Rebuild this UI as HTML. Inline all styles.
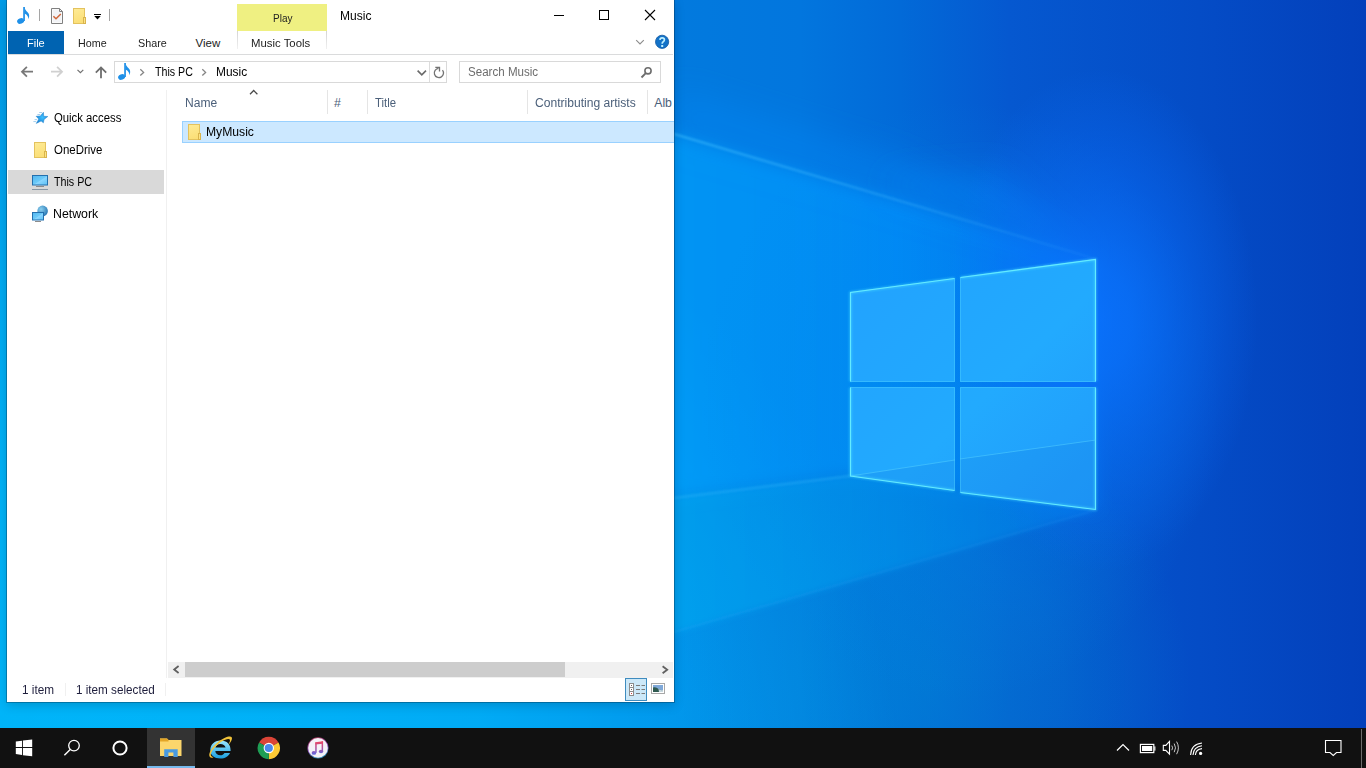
<!DOCTYPE html>
<html><head><meta charset="utf-8">
<style>
*{margin:0;padding:0;box-sizing:border-box}
html,body{width:1366px;height:768px;overflow:hidden;background:#0a6fd6}
body{position:relative;font-family:"Liberation Sans",sans-serif;font-size:12px;color:#000}
.a{position:absolute}
#wall{position:absolute;left:0;top:0;width:1366px;height:728px}
#win{position:absolute;left:7px;top:0;width:667px;height:702px;background:#fff;
 box-shadow:0 0 0 1px rgba(0,25,45,.3), 0 3px 10px rgba(0,30,50,.22)}
#taskbar{position:absolute;left:0;top:728px;width:1366px;height:40px;background:#111}
.t{position:absolute;white-space:nowrap;line-height:1;transform-origin:0 0}
</style></head><body>
<svg id="wall" width="1366" height="728" viewBox="0 0 1366 728">
<defs>
 <linearGradient id="bg" gradientUnits="userSpaceOnUse" x1="0" y1="0" x2="1366" y2="0">
  <stop offset="0" stop-color="#009ce8"/>
  <stop offset="0.25" stop-color="#028ce4"/>
  <stop offset="0.4934" stop-color="#027ade"/>
  <stop offset="0.5857" stop-color="#0276de"/>
  <stop offset="0.659" stop-color="#026ad8"/>
  <stop offset="0.739" stop-color="#0558d0"/>
  <stop offset="0.878" stop-color="#044cc6"/>
  <stop offset="1" stop-color="#0340bb"/>
 </linearGradient>
 <radialGradient id="bl" gradientUnits="userSpaceOnUse" cx="150" cy="800" r="750">
  <stop offset="0" stop-color="#00beff" stop-opacity=".76"/>
  <stop offset="0.45" stop-color="#00beff" stop-opacity=".66"/>
  <stop offset="0.72" stop-color="#00beff" stop-opacity=".42"/>
  <stop offset="1" stop-color="#00beff" stop-opacity="0"/>
 </radialGradient>
 <radialGradient id="bl2" gradientUnits="userSpaceOnUse" cx="930" cy="680" r="260">
  <stop offset="0" stop-color="#0096d4" stop-opacity=".38"/>
  <stop offset="0.5" stop-color="#0096d4" stop-opacity=".25"/>
  <stop offset="1" stop-color="#0096d4" stop-opacity="0"/>
 </radialGradient>
 <linearGradient id="cone" gradientUnits="userSpaceOnUse" x1="674" y1="0" x2="1100" y2="0">
  <stop offset="0" stop-color="#00a4ff" stop-opacity=".62"/>
  <stop offset="0.37" stop-color="#0098ff" stop-opacity=".7"/>
  <stop offset="0.53" stop-color="#0090ff" stop-opacity=".82"/>
  <stop offset="1" stop-color="#0a80ff" stop-opacity=".55"/>
 </linearGradient>
 <radialGradient id="glow" gradientUnits="userSpaceOnUse" cx="1100" cy="320" r="210" gradientTransform="translate(1100 320) scale(0.75 1.2) translate(-1100 -320)">
  <stop offset="0" stop-color="#0a72ff" stop-opacity=".85"/>
  <stop offset="0.2" stop-color="#0a72ff" stop-opacity=".75"/>
  <stop offset="0.5" stop-color="#0a70ff" stop-opacity=".45"/>
  <stop offset="1" stop-color="#0a70ff" stop-opacity="0"/>
 </radialGradient>
 <linearGradient id="floor" gradientUnits="userSpaceOnUse" x1="674" y1="0" x2="1100" y2="0">
  <stop offset="0" stop-color="#00a8f0" stop-opacity=".55"/>
  <stop offset="0.4" stop-color="#00a0f0" stop-opacity=".55"/>
  <stop offset="1" stop-color="#0a88f0" stop-opacity=".4"/>
 </linearGradient>
 <linearGradient id="beamg" gradientUnits="userSpaceOnUse" x1="674" y1="0" x2="1096" y2="0">
  <stop offset="0" stop-color="#40c0ff" stop-opacity=".6"/>
  <stop offset="0.6" stop-color="#40b8ff" stop-opacity=".35"/>
  <stop offset="1" stop-color="#40b0ff" stop-opacity=".1"/>
 </linearGradient>
 <radialGradient id="glow2" gradientUnits="userSpaceOnUse" cx="960" cy="400" r="260" gradientTransform="translate(960 400) scale(1 1.15) translate(-960 -400)">
  <stop offset="0" stop-color="#0288e8" stop-opacity=".45"/>
  <stop offset="0.6" stop-color="#0288e8" stop-opacity=".22"/>
  <stop offset="1" stop-color="#0288e8" stop-opacity="0"/>
 </radialGradient>
 <linearGradient id="pane" gradientUnits="userSpaceOnUse" x1="850" y1="260" x2="1096" y2="510">
  <stop offset="0" stop-color="#22a2fe"/>
  <stop offset="0.55" stop-color="#22aafe"/>
  <stop offset="1" stop-color="#209afa"/>
 </linearGradient>
 <linearGradient id="shadowL" x1="0" y1="0" x2="1" y2="0">
  <stop offset="0" stop-color="#002060" stop-opacity=".2"/>
  <stop offset="1" stop-color="#002060" stop-opacity="0"/>
 </linearGradient>
 <filter id="b16" x="-30%" y="-50%" width="160%" height="200%"><feGaussianBlur stdDeviation="16"/></filter>
 <filter id="b8" x="-20%" y="-20%" width="140%" height="140%"><feGaussianBlur stdDeviation="8"/></filter>
 <filter id="b3" x="-10%" y="-20%" width="120%" height="140%"><feGaussianBlur stdDeviation="3"/></filter>
 <filter id="b2"><feGaussianBlur stdDeviation="1.2"/></filter>
</defs>
<rect width="1366" height="728" fill="url(#bg)"/>
<rect width="1366" height="728" fill="url(#bl)"/>
<rect width="1366" height="728" fill="url(#bl2)"/>
<polygon points="600,112 1096,259 1096,510 850,476 600,507" fill="url(#cone)" filter="url(#b8)"/>
<polygon points="600,507 850,476 1096,510 600,654" fill="url(#floor)" filter="url(#b3)"/>
<path d="M674 632 L1096 510" stroke="#30b0ff" stroke-opacity=".25" stroke-width="1.5" filter="url(#b2)"/>
<rect width="1366" height="728" fill="url(#glow2)"/>
<polygon points="1096,259 900,160 674,90 674,134" fill="#0a90ff" fill-opacity=".3" filter="url(#b16)"/>
<polygon points="1096,259 1000,170 880,180" fill="#0a8cff" fill-opacity=".35" filter="url(#b16)"/>
<rect width="1366" height="728" fill="url(#glow)"/>
<path d="M674 134 L1096 259" stroke="url(#beamg)" stroke-width="2" filter="url(#b2)"/>
<path d="M674 498 L850 476" stroke="#40c0ff" stroke-opacity=".35" stroke-width="2" filter="url(#b2)"/>
<g fill="url(#pane)">
 <polygon points="850,292 955,278 955,382 850,382"/>
 <polygon points="960,277 1096,259 1096,382 960,382"/>
 <polygon points="850,387 955,387 955,491 850,476"/>
 <polygon points="960,387 1096,387 1096,510 960,493"/>
</g>
<g fill="#0050c0" fill-opacity=".1">
 <polygon points="850,476 955,460 955,491"/>
 <polygon points="960,459 1096,440 1096,510 960,493"/>
</g>
<g fill="none" stroke="#50e8ff" stroke-width="2.5" stroke-opacity=".45" filter="url(#b2)">
 <path d="M850.5 381.5 V292.5 L954.5 278.5 M850.5 387.5 V476 L954.5 490.5 M960.5 277.5 L1095.5 259.5 V381.5 M1095.5 387.5 V509.5 L960.5 492.5"/>
</g>
<g fill="none" stroke="#6af0ff" stroke-width="1.1" stroke-opacity=".9">
 <path d="M850.5 381.5 V292.5 L954.5 278.5 M850.5 387.5 V476 L954.5 490.5 M960.5 277.5 L1095.5 259.5 V381.5 M1095.5 387.5 V509.5 L960.5 492.5"/>
</g>
<g fill="none" stroke="#62e4ff" stroke-width="1" stroke-opacity=".3">
 <path d="M954.5 278.5 V381.5 M954.5 387.5 V490.5 M960.5 277.5 V381.5 M960.5 387.5 V492.5 M850.5 381.5 H954.5 M850.5 387.5 H954.5 M960.5 381.5 H1095.5 M960.5 387.5 H1095.5"/>
</g>
<path d="M850.5 476 L955 460 M960 459 L1096 440" stroke="#5ad8ff" stroke-opacity=".45" stroke-width="1"/>

</svg>

<div id="win">
</div>

<!-- title bar / QAT -->
<svg class="a" style="left:8px;top:0" width="666" height="56" viewBox="8 0 666 56">
 <defs><linearGradient id="fold" x1="0" y1="0" x2="0.3" y2="1"><stop offset="0" stop-color="#feeb96"/><stop offset="1" stop-color="#fbdf78"/></linearGradient></defs>
 <defs><linearGradient id="tabb" x1="0" y1="0" x2="0" y2="1"><stop offset="0" stop-color="#d4d4d4"/><stop offset="1" stop-color="#f0f0f0"/></linearGradient></defs>
 <!-- music note -->
 <g fill="#1e90e8"><rect x="23.2" y="7" width="1.7" height="14"/><path d="M24.6 7 C25 10.5 27.2 11.2 28.6 13.6 C29.6 15.4 29.2 17.6 28.2 19.2 C28.4 17.2 27.8 15.2 24.6 13.6 Z"/><ellipse cx="20.6" cy="21" rx="3.6" ry="2.7" transform="rotate(-22 20.6 21)"/></g>
 <rect x="39" y="9" width="1" height="12" fill="#a5a5a5"/>
 <!-- doc -->
 <path d="M51.5 8.5 H59.5 L62.5 11.5 V23.5 H51.5 Z" fill="#fafafa" stroke="#808080" stroke-width="1"/>
 <rect x="53" y="10" width="8" height="12" fill="#f2f3f6"/>
 <path d="M59.5 8.5 V11.5 H62.5" fill="none" stroke="#808080" stroke-width="1"/>
 <path d="M53.4 16.2 L56 18.8 L60.8 14" fill="none" stroke="#d0683c" stroke-width="1.5"/>
 <!-- folder -->
 <g transform="translate(73 8)"><rect x="0.5" y="0.5" width="11" height="15" fill="url(#fold)" stroke="#e3c25e" stroke-width="1"/><rect x="10.5" y="9.5" width="2" height="6" fill="#fde386" stroke="#d9b44c" stroke-width="1"/></g>
 <!-- dropdown -->
 <rect x="94" y="14" width="7" height="1" fill="#000"/>
 <path d="M94.3 16 H100.7 L97.5 19.4 Z" fill="#000"/>
 <rect x="109" y="9" width="1" height="12" fill="#a5a5a5"/>
 <!-- play tab -->
 <rect x="237" y="4" width="90" height="27" fill="#eff082"/>
 <rect x="237" y="31" width="1" height="18" fill="url(#tabb)"/>
 <rect x="326" y="31" width="1" height="18" fill="url(#tabb)"/>
 <!-- file tab -->
 <rect x="8" y="31" width="56" height="23" fill="#0063b1"/>
 <rect x="8" y="54" width="665" height="1" fill="#dadbdc"/>
 <!-- caption buttons -->
 <rect x="554" y="15" width="10" height="1" fill="#000"/>
 <rect x="599.5" y="10.5" width="9" height="9" fill="none" stroke="#000" stroke-width="1"/>
 <path d="M645 10 L655 20 M655 10 L645 20" stroke="#000" stroke-width="1.1"/>
 <!-- ribbon chevron -->
 <path d="M636.2 40.2 L640 44 L643.8 40.2" fill="none" stroke="#8c8c8c" stroke-width="1.1"/>
 <circle cx="662.1" cy="41.8" r="6.6" fill="#1372c8" stroke="#0d55a0" stroke-width=".8"/>
 <path d="M659.9 39.8 Q660.1 37.9 662.2 37.9 Q664.4 37.9 664.4 39.8 Q664.4 41 663.2 41.8 Q662.2 42.4 662.2 43.8" fill="none" stroke="#bff0ff" stroke-width="1.7"/>
 <rect x="661.2" y="45" width="2" height="2" fill="#bff0ff"/>
</svg>


<!-- address bar row -->
<svg class="a" style="left:8px;top:56px" width="666" height="646" viewBox="8 56 666 646">
 <!-- back -->
 <path d="M22 71.7 H33 M26.9 66.8 L22 71.7 L26.9 76.6" fill="none" stroke="#787878" stroke-width="1.8"/>
 <path d="M51 71.7 H62 M57.1 66.8 L62 71.7 L57.1 76.6" fill="none" stroke="#d0d0d0" stroke-width="1.8"/>
 <path d="M77.5 69.8 L80.4 72.7 L83.3 69.8" fill="none" stroke="#707070" stroke-width="1.2"/>
 <path d="M101 78.2 V67.5 M95.8 72.6 L101 67.4 L106.2 72.6" fill="none" stroke="#6e6e6e" stroke-width="1.8"/>
 <!-- address box -->
 <rect x="114.5" y="61.5" width="332" height="21" fill="#fff" stroke="#d9d9d9" stroke-width="1"/>
 <rect x="429" y="62" width="1" height="20" fill="#dcdcdc"/>
 <g fill="#1e90e8" transform="translate(101 56)"><rect x="23.2" y="7" width="1.7" height="14"/><path d="M24.6 7 C25 10.5 27.2 11.2 28.6 13.6 C29.6 15.4 29.2 17.6 28.2 19.2 C28.4 17.2 27.8 15.2 24.6 13.6 Z"/><ellipse cx="20.6" cy="21" rx="3.6" ry="2.7" transform="rotate(-22 20.6 21)"/></g>
 <path d="M140.3 69.3 L143.6 72.4 L140.3 75.5" fill="none" stroke="#848484" stroke-width="1.3"/>
 <path d="M202.3 69.3 L205.6 72.4 L202.3 75.5" fill="none" stroke="#848484" stroke-width="1.3"/>
 <path d="M417.6 70.6 L421.8 74.8 L426 70.6" fill="none" stroke="#6a6a6a" stroke-width="1.6"/>
 <path d="M442.5 70.1 A4.6 4.6 0 1 1 438.5 68.4" fill="none" stroke="#737373" stroke-width="1.3"/>
 <path d="M435.3 67.4 H439.5 V71.6" fill="none" stroke="#737373" stroke-width="1.3"/>
 <!-- search box -->
 <rect x="459.5" y="61.5" width="201" height="21" fill="#fff" stroke="#d9d9d9" stroke-width="1"/>
 <circle cx="648" cy="70.8" r="3.1" fill="none" stroke="#6d6d6d" stroke-width="1.6"/>
 <path d="M645.8 73.1 L641.5 77.5" stroke="#6d6d6d" stroke-width="1.9"/>
 <!-- nav pane -->
 <rect x="8" y="170" width="156" height="24" fill="#d9d9d9"/>
 <rect x="166" y="90" width="1" height="588" fill="#f0f0f0"/>
 <!-- star -->
 <defs><radialGradient id="starg" cx="0.55" cy="0.45" r="0.6"><stop offset="0" stop-color="#3cc0ff"/><stop offset="1" stop-color="#1a82d4"/></radialGradient></defs>
 <polygon points="43.4,112.3 43.7,116.3 47.8,116.5 44.0,119.5 43.4,122.8 41.1,121.0 36.3,123.4 38.8,119.0 36.1,116.3 40.4,115.9" fill="url(#starg)" stroke="#1c7cc8" stroke-width=".5" stroke-linejoin="round"/>
 <path d="M39.2 112.5 H42 M37.4 114.5 H40.3 M34.6 119.6 H37.2 M33.4 121.6 H36.2" stroke="#5aa8e0" stroke-width=".8" stroke-opacity=".7"/>
 <!-- onedrive folder -->
 <g transform="translate(34 142)"><rect x="0.5" y="0.5" width="11" height="15" fill="url(#fold)" stroke="#e3c25e" stroke-width="1"/><rect x="10.5" y="9.5" width="2" height="6" fill="#fde386" stroke="#d9b44c" stroke-width="1"/></g>
 <!-- this pc -->
 <defs><linearGradient id="mon" x1="0" y1="0" x2="1" y2="1"><stop offset="0" stop-color="#52b6f0"/><stop offset="0.5" stop-color="#6ccaf8"/><stop offset="0.55" stop-color="#8ad6ff"/><stop offset="1" stop-color="#5cc0f4"/></linearGradient></defs>
 <rect x="32.5" y="175.5" width="15" height="9.5" fill="url(#mon)" stroke="#2470ae" stroke-width="1"/>
 <rect x="36" y="186" width="8" height="1" fill="#8c8c8c"/>
 <rect x="32" y="189" width="16" height="1" fill="#8898a6"/>
 <!-- network -->
 <defs><radialGradient id="glob" cx="0.35" cy="0.35" r="0.7"><stop offset="0" stop-color="#8ad0f0"/><stop offset="1" stop-color="#2a78b4"/></radialGradient></defs>
 <circle cx="42.6" cy="210.9" r="5.3" fill="url(#glob)"/>
 <rect x="32.5" y="212.5" width="11" height="7.5" fill="url(#mon)" stroke="#2470ae" stroke-width="1"/>
 <rect x="35" y="221" width="6" height="1" fill="#8c8c8c"/>
 <!-- column headers -->
 <rect x="327" y="90" width="1" height="24" fill="#e5e5e5"/>
 <rect x="367" y="90" width="1" height="24" fill="#e5e5e5"/>
 <rect x="527" y="90" width="1" height="24" fill="#e5e5e5"/>
 <rect x="647" y="90" width="1" height="24" fill="#e5e5e5"/>
 <path d="M250 94.2 L253.7 90.5 L257.4 94.2" fill="none" stroke="#4a4a4a" stroke-width="1.25"/>
 <!-- selected row -->
 <rect x="182.5" y="121.5" width="500" height="21" fill="#cce8ff" stroke="#99d1ff" stroke-width="1"/>
 <g transform="translate(188 124)"><rect x="0.5" y="0.5" width="11" height="15" fill="url(#fold)" stroke="#e3c25e" stroke-width="1"/><rect x="10.5" y="9.5" width="2" height="6" fill="#fde386" stroke="#d9b44c" stroke-width="1"/></g>
 <!-- scrollbar -->
 <rect x="168" y="662" width="505" height="16" fill="#f0f0f0"/>
 <rect x="185" y="662" width="380" height="15" fill="#cdcdcd"/>
 <path d="M178.6 666 L174.2 669.5 L178.6 673" fill="none" stroke="#606060" stroke-width="1.8"/>
 <path d="M662.6 666.3 L667.2 669.8 L662.6 673.3" fill="none" stroke="#606060" stroke-width="1.8"/>
 <!-- status separators -->
 <rect x="65" y="683" width="1" height="13" fill="#f0f0f0"/>
 <rect x="165" y="683" width="1" height="13" fill="#f0f0f0"/>
 <!-- view buttons -->
 <rect x="625.5" y="678.5" width="21" height="22" fill="#cce8f8" stroke="#3f8cbf" stroke-width="1"/>
 <g fill="#fff" stroke="#8c8c8c" stroke-width="1">
  <rect x="629.5" y="683.5" width="4" height="4"/>
  <rect x="629.5" y="687.5" width="4" height="4"/>
  <rect x="629.5" y="691.5" width="4" height="4"/>
 </g>
 <rect x="631" y="685" width="1" height="1" fill="#666"/>
 <rect x="631" y="689" width="1" height="1" fill="#666"/>
 <rect x="631" y="693" width="1" height="1" fill="#c44"/>
 <path d="M636 685.5 H640 M641.5 685.5 H645 M636 689.5 H640 M641.5 689.5 H645 M636 693.5 H640 M641.5 693.5 H645" stroke="#7a7a7a" stroke-width="1"/>
 <rect x="651.5" y="683.5" width="13" height="10" fill="#fff" stroke="#a8a8a8" stroke-width="1"/>
 <rect x="653" y="685" width="10" height="7" fill="#7fa8d8"/>
 <path d="M653 687.5 Q656 686.5 658.5 689 Q660.5 690.5 663 690 V692 H653 Z" fill="#2f5a50"/>
 <path d="M658.5 689 Q660.5 690.5 663 690 V692 H659 Z" fill="#c8d8e0"/>
</svg>

<!--TEXT-->
<div class="t" style="left:340.20px;top:9.89px;font-size:12.3px;color:#000;transform:scaleX(0.9781)">Music</div>
<div class="t" style="left:272.50px;top:12.51px;font-size:11.8px;color:#222;transform:scaleX(0.8478)">Play</div>
<div class="t" style="left:26.70px;top:38.27px;font-size:11.5px;color:#fff;transform:scaleX(0.9561)">File</div>
<div class="t" style="left:77.50px;top:38.27px;font-size:11.5px;color:#222;transform:scaleX(0.9323)">Home</div>
<div class="t" style="left:137.50px;top:38.27px;font-size:11.5px;color:#222;transform:scaleX(0.9355)">Share</div>
<div class="t" style="left:195.50px;top:38.27px;font-size:11.5px;color:#222;transform:scaleX(1.0000)">View</div>
<div class="t" style="left:251.40px;top:38.27px;font-size:11.5px;color:#222;transform:scaleX(0.9883)">Music Tools</div>
<div class="t" style="left:154.50px;top:65.59px;font-size:12.3px;color:#000;transform:scaleX(0.8659)">This PC</div>
<div class="t" style="left:215.60px;top:65.59px;font-size:12.3px;color:#000;transform:scaleX(0.9688)">Music</div>
<div class="t" style="left:468.20px;top:65.59px;font-size:12.3px;color:#6d6d6d;transform:scaleX(0.9411)">Search Music</div>
<div class="t" style="left:53.60px;top:111.59px;font-size:12.3px;color:#000;transform:scaleX(0.9205)">Quick access</div>
<div class="t" style="left:53.60px;top:143.59px;font-size:12.3px;color:#000;transform:scaleX(0.9308)">OneDrive</div>
<div class="t" style="left:53.60px;top:175.59px;font-size:12.3px;color:#000;transform:scaleX(0.8705)">This PC</div>
<div class="t" style="left:52.80px;top:207.59px;font-size:12.3px;color:#000;transform:scaleX(1.0038)">Network</div>
<div class="t" style="left:184.90px;top:97.09px;font-size:12.3px;color:#4c607a;transform:scaleX(0.9801)">Name</div>
<div class="t" style="left:334.00px;top:97.09px;font-size:12.3px;color:#4c607a;transform:scaleX(1.0000)">#</div>
<div class="t" style="left:374.70px;top:97.09px;font-size:12.3px;color:#4c607a;transform:scaleX(0.9261)">Title</div>
<div class="t" style="left:534.70px;top:96.59px;font-size:12.3px;color:#4c607a;transform:scaleX(0.9825)">Contributing artists</div>
<div class="t" style="left:654.20px;top:96.59px;font-size:12.3px;color:#4c607a;transform:scaleX(1.0000)">Alb</div>
<div class="t" style="left:206.20px;top:125.59px;font-size:12.3px;color:#000;transform:scaleX(0.9878)">MyMusic</div>
<div class="t" style="left:21.60px;top:683.59px;font-size:12.3px;color:#1e1e3c;transform:scaleX(0.9573)">1 item</div>
<div class="t" style="left:75.50px;top:683.59px;font-size:12.3px;color:#1e1e3c;transform:scaleX(0.9514)">1 item selected</div>
<!--/TEXT-->
<div id="taskbar">
<svg class="a" style="left:0;top:0" width="1366" height="40" viewBox="0 728 1366 40">
 <!-- start -->
 <path d="M15.8 741.4 L22 740.8 V747 H15.8 Z M22.9 740.6 L32.2 739.6 V747 H22.9 Z M15.8 748 H22 V755 L15.8 754 Z M22.9 748 H32.2 V756.2 L22.9 755.2 Z" fill="#fff"/>
 <!-- search -->
 <circle cx="74" cy="745.6" r="5.3" fill="none" stroke="#fff" stroke-width="1.3"/>
 <path d="M70.2 749.4 L64.4 755.3" stroke="#fff" stroke-width="1.4"/>
 <!-- cortana -->
 <circle cx="120" cy="748" r="6.6" fill="none" stroke="#fff" stroke-width="2"/>
 <!-- explorer active -->
 <rect x="147" y="728" width="48" height="40" fill="#333"/>
 <rect x="147" y="766" width="48" height="2" fill="#76b9ed"/>
 <path d="M160 738.5 H167 L168.5 740 H181.5 V756 H160 Z" fill="#fcd66c"/>
 <path d="M160 738.5 H167 L168.5 740 V741.5 H160 Z" fill="#e3a526"/>
 <path d="M164.2 757 V749.2 H177.7 V757 H173.4 V752.4 H168.4 V757 Z" fill="#4a9ae0"/>
 <!-- IE -->
 <defs><linearGradient id="ieg" x1="0" y1="0" x2="0" y2="1"><stop offset="0" stop-color="#9be6ff"/><stop offset="1" stop-color="#1aa0e0"/></linearGradient></defs>
 <path d="M220.5 740.5 C214 740.5 210.3 745 210.3 750 C210.3 755.5 214.3 758.5 220.5 758.5 C225 758.5 228.5 756.5 230 753 H224.5 C223.5 754.5 222 755.3 220.4 755.3 C217.5 755.3 215.4 753.5 215.3 751 H230.6 C230.9 744.5 227 740.5 220.5 740.5 Z M215.5 747.5 C216 745.5 218 744.1 220.4 744.1 C223 744.1 225 745.5 225.6 747.5 Z" fill="url(#ieg)"/>
 <path d="M210 757 C207 753.5 214.5 742.5 224.5 738 C230 735.5 232.8 736.2 231.8 739.6 C231.2 741.8 229.6 743.8 228 745.4 C229.4 743 230.4 741 229.8 739.6 C228.6 737.3 219 741.5 213 749.5 C210 753.8 210 756.5 213.5 757.2 C211.5 758.2 210.5 757.8 210 757 Z" fill="#f2c43a"/>
 <!-- chrome -->
 <path d="M268.8 748 L259.1 742.4 A11.2 11.2 0 0 1 278.5 742.4 Z" fill="#db4437"/>
 <path d="M268.8 748 L278.5 742.4 A11.2 11.2 0 0 1 268.8 759.2 Z" fill="#fcc934"/>
 <path d="M268.8 748 L268.8 759.2 A11.2 11.2 0 0 1 259.1 742.4 Z" fill="#1e9e55"/>
 <circle cx="268.8" cy="748" r="5.2" fill="#fff"/>
 <circle cx="268.8" cy="748" r="4.1" fill="#4a88ec"/>
 <!-- itunes -->
 <defs><linearGradient id="itg" gradientUnits="userSpaceOnUse" x1="0" y1="741" x2="0" y2="755"><stop offset="0" stop-color="#f04860"/><stop offset="0.5" stop-color="#b0509a"/><stop offset="1" stop-color="#5a6ae8"/></linearGradient>
 <linearGradient id="itr" x1="0" y1="0" x2="0.3" y2="1"><stop offset="0" stop-color="#ff5070"/><stop offset="0.6" stop-color="#c060ff"/><stop offset="1" stop-color="#40c0ff"/></linearGradient></defs>
 <circle cx="318" cy="747.9" r="10.6" fill="url(#itr)" fill-opacity=".7"/>
 <circle cx="318" cy="747.9" r="9.8" fill="#f4f2f7"/>
 <g fill="url(#itg)">
  <path d="M315.4 742.2 L323 741.3 V743.8 L315.4 744.6 Z"/>
  <rect x="315.2" y="742.4" width="1.5" height="10.4"/>
  <rect x="321.6" y="741.4" width="1.5" height="9.8"/>
  <ellipse cx="313.9" cy="752.9" rx="2.3" ry="1.9"/>
  <ellipse cx="321" cy="751.5" rx="2.2" ry="1.8"/>
 </g>
 <!-- tray -->
 <path d="M1117 750.5 L1123 744.5 L1129 750.5" fill="none" stroke="#fff" stroke-width="1.2"/>
 <rect x="1140.4" y="744.4" width="13.4" height="8.2" fill="none" stroke="#fff" stroke-width="1.2"/>
 <rect x="1142" y="746" width="10.2" height="5" fill="#fff"/>
 <rect x="1154.3" y="746.4" width="1.1" height="4.2" fill="#fff"/>
 <path d="M1163.3 745.4 H1165.8 L1169.5 741.4 V754.2 L1165.8 750.4 H1163.3 Z" fill="none" stroke="#fff" stroke-width="1.1"/>
 <path d="M1171.8 745.6 Q1173.4 747.8 1171.8 750.2 M1174.2 743.6 Q1176.8 747.8 1174.2 752.2 M1176.6 741.6 Q1180.2 747.8 1176.6 754.2" fill="none" stroke="#ddd" stroke-width="0.9"/>
 <path d="M1190.6 755 Q1191 744.2 1202 743 M1193 755 Q1193.4 746.8 1202 745.8 M1195.4 755 Q1195.8 749.2 1202 748.6" fill="none" stroke="#fff" stroke-width="1.1"/>
 <circle cx="1200.6" cy="753.4" r="1.6" fill="#fff"/>
 <path d="M1325.5 740.5 H1341 V752.5 H1336.5 L1333.25 755.5 L1330 752.5 H1325.5 Z" fill="none" stroke="#fff" stroke-width="1.1"/>
 <rect x="1361" y="729" width="1" height="39" fill="#6c6c6c"/>
</svg>
</div>
</body></html>
